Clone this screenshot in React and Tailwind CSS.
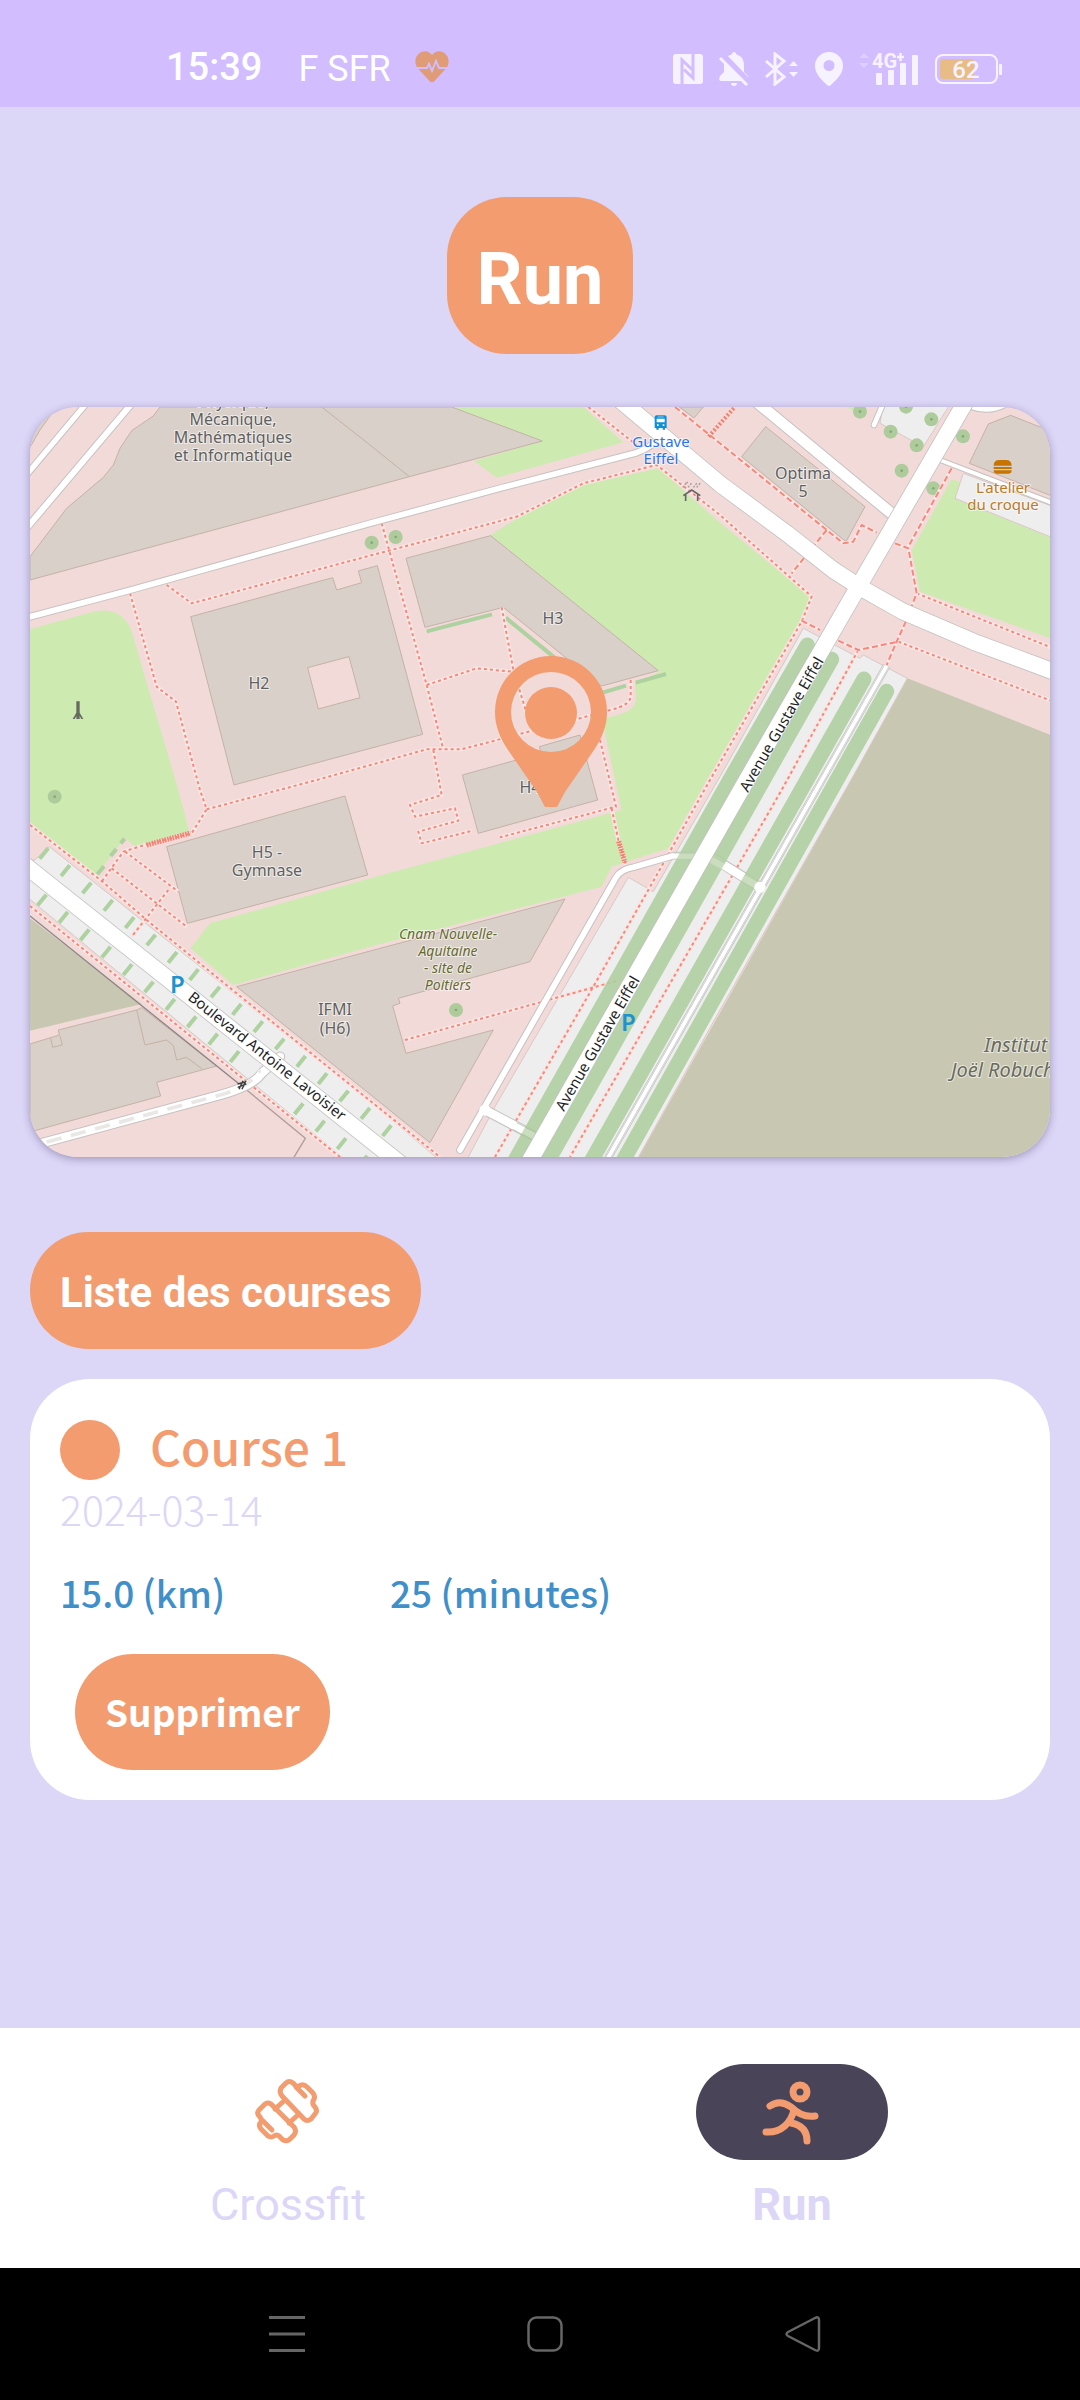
import React from "react";

const ROBOTO = "font-[Roboto,sans-serif]";
const SOURCE = "font-['Noto_Sans_CJK_SC',sans-serif]";

/* ---------- Map data (drawing units, three per pixel) ---------- */

const buildings = [
  "30,21 112,21 85,55 60,90 30,142",
  "30,470 140,325 250,232 280,195 300,145 335,92 400,48 420,21 1295,21 1567,123 1168,230 30,540",
  "512,650 938,533 950,570 1025,548 1015,513 1072,497 1208,1003 642,1155",
  "1158,475 1412,407 1915,812 1745,858 1640,775 1450,622 1215,682",
  "1327,1125 1490,1080 1565,1062 1558,1040 1680,1005 1733,1200 1375,1300",
  "440,1340 975,1188 1043,1425 502,1570",
  "650,1760 1635,1497 1530,1685 1135,1795 1140,1810 1118,1818 1158,1960 1420,1890 1230,2228",
  "30,1932 118,1905 115,1890 350,1830 365,1823 590,1998 410,2047 422,2088 30,2196",
  "2237,80 2535,320 2478,425 2165,170",
  "2848,190 2905,72 2972,46 3045,75 3100,95 3100,290",
  "1978,21 2050,21 2022,54",
];

const grass = [
  "M30 687L225 634Q300 620 332 685L475 1170L507 1292L345 1340L315 1312L228 1427L30 1266Z",
  "M1295 21H1690L1810 127L1430 233L1362 183L1567 123Z",
  "M1915 205L2100 368L2370 590L2340 660L2060 1140L1945 1345L1820 1385L1775 1400L1745 1460L1050 1640L640 1755L512 1645L570 1570L1050 1435L1805 1230L1755 1000L1752 955L1795 945Q1850 930 1848 890L1845 850L1920 815L1412 405L1500 350L1690 255Z",
  "M2795 238L2820 245L2808 297L3100 416V718L2700 575L2675 450Z",
  "M2480 21H2540L2530 50Z",
];

const footways = [
  "M330 580L410 860L468 905L540 1170L560 1228L515 1300L380 1333L310 1355L245 1445",
  "M560 1228L890 1140L1220 1048H1325L1450 1015L1680 955L1770 930Q1835 915 1832 885V840",
  "M1085 370L1220 855L1270 1048M1240 1050L1265 1185L1170 1215L1185 1250L1305 1225L1315 1262L1195 1295L1205 1330L1355 1293",
  "M440 555L515 610L1050 467L1490 350L1690 250L1910 195L2100 345L2375 590L2345 665L2070 1140L1885 1470L1720 1760L1425 2271",
  "M1220 855L1370 805L1475 815M1445 622L1480 810L1520 940",
  "M1740 1020L1788 1220L1440 1312M1775 1225L1795 1320L1818 1395",
  "M1705 21L1850 135",
  "M2690 580L3100 745M2635 725L3100 905M2515 750L2285 1170L1650 2271",
  "M30 1275L250 1447L380 1560L650 1780L1265 2275",
  "M30 1518L680 2045L965 2275",
  "M315 1355L475 1475M275 1405L500 1580M445 1470L335 1610",
  "M1155 1920L1800 1740",
];

const crossings = [
  "M1965 21L2100 130L2420 390L2470 430L2500 425L2525 375L2570 398M2420 390L2315 520",
  "M2625 430L2665 445L2690 580L2655 670L2630 725L2600 795M2795 205L2665 440",
  "M2345 662L2400 690M2455 722L2515 750L2635 725",
];

const roads = [
  { d: "M20 224L200 9", w: 16 },
  { d: "M20 384L337 9", w: 18 },
  { d: "M20 653L325 572L1050 370L1450 262L1850 158Q1900 140 1930 100", w: 17 },
  { d: "M2215 10L2620 345", w: 32 },
  { d: "M2590 10L2562 75", w: 14 },
  { d: "M2850 18Q2910 40 2960 10", w: 16 },
  { d: "M2760 180L3100 310", w: 12 },
  { d: "M1320 2250L1788 1432Q1804 1408 1840 1402L1960 1367H2025", w: 17 },
  { d: "M1395 2130L1550 2212", w: 26 },
  { d: "M2080 1375L2220 1462", w: 26 },
  { d: "M20 2242L600 2085Q700 2058 725 2020L780 1970", w: 25 },
  { d: "M0 1384L1160 2306", w: 48 },
  { d: "M1800 0L2100 252L2300 400L2440 510L2520 562L2650 635L2860 725L3120 822", w: 48 },
  { d: "M2840 0L2515 560L2180 1140L1525 2290", w: 48 },
];

const treeBands = [
  "M2362 735L2129 1140L1480 2290",
  "M2435 778L1580 2290",
  "M2532 837L1710 2290",
  "M2600 874L1805 2290",
];

const trees = [
  [1055, 428], [1127, 411], [104, 1190], [1308, 1830], [2520, 35], [2612, 95],
  [2658, 20], [2734, 58], [2690, 136], [2829, 109], [2645, 212], [2740, 265],
];

const upperTicks = Array.from({ length: 17 }, (_, i) => [72 + i * 64.3, 1360 + i * 52]);
const lowerTicks = Array.from({ length: 16 }, (_, i) => [66 + i * 64.2, 1500 + i * 52.2]).filter(
  (_, i) => i !== 10 && i !== 11,
);

const labels = [
  { x: 203, y: 0, lines: ["Physique,", "Mécanique,", "Mathématiques", "et Informatique"], step: 18 },
  { x: 229, y: 282, lines: ["H2"] },
  { x: 523, y: 217, lines: ["H3"] },
  { x: 500, y: 386, lines: ["H4"] },
  { x: 773, y: 72, lines: ["Optima", "5"], step: 18 },
  { x: 237, y: 451, lines: ["H5 -", "Gymnase"], step: 18 },
  { x: 305, y: 608, lines: ["IFMI", "(H6)"], step: 19 },
];

function MapLabel({ x, y, lines, step = 17, className = "fill-[#5f5f5f] text-[16px]" }) {
  return (
    <text
      textAnchor="middle"
      className={`stroke-white/60 stroke-2 [paint-order:stroke] ${className}`}
    >
      {lines.map((line, i) => (
        <tspan key={line} x={x} y={y + i * step}>
          {line}
        </tspan>
      ))}
    </text>
  );
}

function CampusMap() {
  return (
    <svg
      viewBox="0 0 1020 750"
      role="img"
      aria-label="Carte du campus"
      className="block h-auto w-full bg-[#f2dad9] font-['Noto_Sans',sans-serif]"
    >
      <g transform="translate(-10 -7) scale(0.33333)" fill="none" strokeLinejoin="round">
        <g fill="#c8c7b2">
          <path d="M2662 835L3100 1008V2290H1846L2493 1140Z" />
          <path d="M30 1555L365 1812L30 1892Z" />
        </g>
        <g fill="#cdebb0">
          {grass.map((d) => (
            <path key={d} d={d} />
          ))}
        </g>
        <g fill="#eeeeee" stroke="#d8c8c6" strokeWidth="3">
          <path d="M2350 685L2520 775L2530 765L2662 835L2493 1140L2100 1830L1845 2290H1335L1425 2120L1825 1432L1900 1475L2100 1130Z" />
          <path d="M88 1340L1050 2105L1270 2290H990L20 1490V1380H45Z" />
          <path d="M2590 10H2792L2710 140L2580 70Z" />
          <path d="M2830 220L2805 295L3100 414V320Z" />
        </g>
        <g fill="#d9d0c9" stroke="#c3b2a7" strokeWidth="3">
          {buildings.map((p) => (
            <polygon key={p} points={p} />
          ))}
          <polygon points="863,803 987,770 1020,893 895,927" fill="#f2dad9" />
          <path fill="none" d="M905 21L1050 135L1168 230" />
          <path fill="none" d="M350 1830L375 1935L440 1920L460 1937L470 1980L500 1972L545 2006" />
          <path fill="none" d="M92 1915L98 1942L127 1935L120 1908" />
        </g>
        <path d="M30 1548L680 2070" stroke="#8b8583" strokeWidth="4" />
        <path d="M680 2070L856 2215L820 2275" stroke="#b09c9a" strokeWidth="4" />
        <g stroke="#aed1a0" strokeWidth="12">
          <path d="M1220 694L1416 643M1457 653L1625 790M1750 877L1818 857M1847 848L1938 822" />
          {[...upperTicks, ...lowerTicks].map(([x, y]) => (
            <path key={`${x}-${y}`} d={`M${x - 13} ${y + 16}l26 -32`} />
          ))}
          <path d="M302 1330l12 -14M272 1368l17 -21M232 1423l20 -24" />
        </g>
        <g fill="#aecb9b">
          {trees.map(([x, y]) => (
            <g key={`${x}-${y}`}>
              <circle cx={x} cy={y} r="21" />
              <circle cx={x} cy={y} r="4" fill="#86a878" />
            </g>
          ))}
        </g>
        <g stroke="#f6e7e4" strokeWidth="12">
          {footways.map((d) => (
            <path key={d} d={d} />
          ))}
        </g>
        <g stroke="#f8877b" strokeWidth="6" strokeDasharray="9 9">
          {footways.map((d) => (
            <path key={d} d={d} />
          ))}
        </g>
        <g stroke="#f6e7e4" strokeWidth="10">
          {crossings.map((d) => (
            <path key={d} d={d} />
          ))}
        </g>
        <g stroke="#f8877b" strokeWidth="6" strokeDasharray="18 9">
          {crossings.map((d) => (
            <path key={d} d={d} />
          ))}
        </g>
        <path d="M380 1335L512 1299M1796 1324L1815 1388" stroke="#f4806f" strokeWidth="15" strokeDasharray="5 3" />
        <path d="M2066 110L2142 24" stroke="#f4806f" strokeWidth="12" strokeDasharray="6 6" />
        <g strokeLinecap="round">
          {roads.slice(0, 11).map((r) => (
            <path key={r.d} d={r.d} stroke="#c6c2c1" strokeWidth={r.w + 6} />
          ))}
          {roads.slice(0, 11).map((r) => (
            <path key={r.d} d={r.d} stroke="#ffffff" strokeWidth={r.w} />
          ))}
        </g>
        <path d="M80 2226L600 2085Q690 2062 720 2010" stroke="#e9e8e6" strokeWidth="11" strokeDasharray="46 29" />
        <g stroke="#b1cfa1" strokeWidth="45" strokeLinecap="round" opacity="0.9">
          {treeBands.map((d) => (
            <path key={d} d={d} />
          ))}
        </g>
        <path
          d="M1960 1367H2050L2220 1462M1395 2130L1550 2212"
          stroke="#ffffff"
          strokeWidth="20"
          opacity="0.25"
        />
        <path d="M1960 1359H2025M1490 2168L1550 2199M1478 2188L1545 2224" stroke="#a3bb98" strokeWidth="2" />
        <path d="M2600 797L1755 2290" stroke="#bdbdbd" strokeWidth="23" />
        <path d="M2600 797L1755 2290" stroke="#eeeeee" strokeWidth="19" />
        <path d="M2600 797L1755 2290" stroke="#bdbdbd" strokeWidth="15" />
        <path d="M2600 797L1755 2290" stroke="#ffffff" strokeWidth="12" />
        <circle cx="2220" cy="1462" r="17" fill="#ffffff" />
        <circle cx="1395" cy="2130" r="17" fill="#ffffff" />
        {roads.slice(11).map((r) => (
          <path key={r.d} d={r.d} stroke="#c3c3c0" strokeWidth={r.w + 5} />
        ))}
        {roads.slice(11).map((r) => (
          <path key={r.d} d={r.d} stroke="#ffffff" strokeWidth={r.w} />
        ))}
        <path d="M653 2062l26 -10M653 2052l24 -6M657 2068l12 -26M666 2068l12 -26" stroke="#3c3c3c" strokeWidth="4" />

        {/* Monument */}
        <path d="M169 904h10v34l11 19h-6l-5 -9v9h-10v-9l-5 9h-6l11 -19z" fill="#666b60" />
        {/* Rain shelter */}
        <path d="M1990 287L2015 270L2041 287M1997 284V303M2033 284V303" stroke="#666666" strokeWidth="5" />
        <path d="M1988 262l12 -14M2004 262l12 -14M2020 262l12 -14M1999 250l5 -5M2030 262l12 -14" stroke="#a99a97" strokeWidth="4" strokeDasharray="6 4" />
        {/* Bus stop */}
        <path d="M1910 46h24q6 0 6 6v32h-5v5h-7v-5h-12v5h-7v-5h-5V52q0-6 6-6z" fill="#1090d6" />
        <path d="M1910 56h24v11h-24zM1911 73h5v5h-5zM1928 73h5v5h-5zM1913 50h18v2h-18z" fill="#ffffff" />
        {/* Burger */}
        <path d="M2921 197q0-17 17-17h20q17 0 17 17zM2921 201h54v6h-54zM2921 211h54q0 10-9 10h-36q-9 0-9-10z" fill="#c77400" />
      </g>

      {labels.map((l) => (
        <MapLabel key={l.lines[0]} {...l} />
      ))}
      <MapLabel x={631} y={40} lines={["Gustave", "Eiffel"]} className="fill-[#2a74ea] text-[15px]" />
      <MapLabel x={973} y={86} lines={["L'atelier", "du croque"]} className="fill-[#bb7a27] text-[15px]" />
      <MapLabel
        x={418}
        y={532}
        lines={["Cnam Nouvelle-", "Aquitaine", "- site de", "Poitiers"]}
        className="fill-[#67682f] text-[14px] italic"
      />
      <text className="fill-[#6a6a5c] stroke-white/60 stroke-2 text-[20px] italic [paint-order:stroke]">
        <tspan x="954" y="645">Institut</tspan>
        <tspan x="921" y="670">Joël Robuchon</tspan>
      </text>
      <g className="fill-[#1f1f1f] stroke-white/60 stroke-2 text-[15px] [paint-order:stroke]">
        <text transform="translate(718 386) rotate(-60)">Avenue Gustave Eiffel</text>
        <text transform="translate(534 705) rotate(-60)">Avenue Gustave Eiffel</text>
        <text transform="translate(157 592) rotate(38.5)">Boulevard Antoine Lavoisier</text>
      </g>
      <g className="fill-[#1f92cf] text-[24px] font-semibold">
        <text x="140" y="586">P</text>
        <text x="591" y="624">P</text>
      </g>

      {/* Position marker */}
      <path
        fill="#f39c6f"
        fillRule="evenodd"
        d="M465 305a56 56 0 0 1 112 0c0 14 -5 26 -13 38L535 385L527 400h-12L507 385L478 343c-8 -12 -13 -24 -13 -38zM481 305a40 40 0 0 0 80 0a40 40 0 0 0 -80 0z"
      />
      <circle cx="521" cy="306" r="26" fill="#f39c6f" />
    </svg>
  );
}

/* ---------- Status bar ---------- */

function StatusBar() {
  return (
    <header className={`flex h-[107px] items-end justify-between bg-[#d1bdff] pr-[78px] pb-5 pl-[166px] ${ROBOTO}`}>
      <div className="flex items-center text-white">
        <span className="text-[38px] leading-9 font-medium">15:39</span>
        <span className="ml-9 pt-1 text-[36px] leading-9">F SFR</span>
        <svg width="34" height="32" viewBox="0 0 34 32" className="ml-6" aria-hidden="true">
          <path
            d="M17 4C20 -.5 26-1 30 2.500C34 6 35 12 31.500 17L19 30.500Q17 32 15 30.500L2.500 17C-1 12 0 6 4 2.500C8-1 14-.5 17 4Z"
            fill="#df9c77"
          />
          <path d="M2 17H12L14 13L17 20L21 10L24 17H32" fill="none" stroke="#d1bdff" strokeWidth="2" />
        </svg>
      </div>
      <div className="flex h-9 items-center gap-4 text-[#f7f2ff]">
        <svg width="30" height="30" viewBox="0 0 30 30" aria-hidden="true">
          <rect width="30" height="30" rx="3" fill="currentColor" />
          <path d="M9 30V6L19 15.500M20 0V24L11 15.500" fill="none" stroke="#d1bdff" strokeWidth="3" />
        </svg>
        <svg width="30" height="34" viewBox="0 0 30 34" aria-hidden="true">
          <path
            d="M15 0q2 0 2.500 2.500C23 4 25 8 25 13V20L29 24q2 5-1 5H2q-3 0-1-5l4-4V13C5 8 7 4 12.500 2.500Q13 0 15 0ZM12 31h6q0 3-3 3t-3-3z"
            fill="currentColor"
          />
          <path d="M3 3L29 30" stroke="#d1bdff" strokeWidth="7" />
          <path d="M1 6L28 33" stroke="currentColor" strokeWidth="3" />
        </svg>
        <svg width="34" height="34" viewBox="0 0 34 34" fill="none" aria-hidden="true">
          <path d="M1 9L19 25L10 32V2L19 9L1 25" stroke="currentColor" strokeWidth="3" />
          <path d="M24 14L28.500 9L33 14ZM24 20L28.500 25L33 20Z" fill="currentColor" />
        </svg>
        <svg width="28" height="34" viewBox="0 0 28 34" aria-hidden="true">
          <path
            d="M14 0a14 14 0 0 1 14 14c0 8-7 14-12 19q-2 2-4 0C7 28 0 22 0 14A14 14 0 0 1 14 0ZM14 8a5.500 5.500 0 1 0 0 11a5.500 5.500 0 0 0 0-11Z"
            fill="currentColor"
            fillRule="evenodd"
          />
        </svg>
        <svg width="60" height="34" viewBox="0 0 60 34" className="overflow-visible" aria-hidden="true">
          <path d="M0 6L5 1L10 6ZM0 11L5 16L10 11Z" fill="#dccfff" />
          <text x="13" y="16" fill="currentColor" className="text-[20px] font-bold">
            4G
          </text>
          <path d="M38 5h7M41.500 1v8" stroke="currentColor" strokeWidth="2.500" />
          <g fill="currentColor">
            <rect x="17" y="21" width="6" height="12" rx="1" />
            <rect x="29" y="18" width="6" height="15" rx="1" />
            <rect x="41" y="11" width="6" height="22" rx="1" />
            <rect x="53" y="3" width="6" height="30" rx="1" />
          </g>
        </svg>
        <svg width="67" height="30" viewBox="0 0 67 30" aria-hidden="true">
          <rect x="1" y="1" width="61" height="28" rx="7" fill="none" stroke="currentColor" strokeWidth="2" />
          <rect x="5" y="5" width="34" height="20" rx="3" fill="#e8bc85" />
          <rect x="64" y="10" width="3" height="11" rx="1" fill="currentColor" />
          <text x="31" y="24" textAnchor="middle" fill="currentColor" className="text-[24px] font-medium">
            62
          </text>
        </svg>
      </div>
    </header>
  );
}

/* ---------- Tab icons ---------- */

function DumbbellIcon() {
  return (
    <svg width="72" height="72" viewBox="1 0 72 72" fill="none" stroke="#f39c6f" strokeWidth="5" strokeLinecap="round" strokeLinejoin="round" aria-hidden="true">
      <path d="M8 34L14 28Q17 26 20 28L43 51Q46 55 43 59L39 63Q36 66 32 64L28 60Q26 58 23 60Q20 62 17 60L10 53Q7 49 10 46Q11 44 9 41Q5 38 8 34Z" />
      <path d="M30 12L35 7Q38 4 42 7L46 11L50 9Q53 8 56 11L62 17Q65 21 62 25Q61 28 64 31Q67 35 64 38L60 43Q56 46 53 43L31 20Q28 16 30 12Z" />
      <path d="M45 11L54 20M12 45L21 54M24 33L34 24M38 47L48 38" />
    </svg>
  );
}

function RunnerIcon() {
  return (
    <svg width="72" height="72" viewBox="1 0 72 72" fill="none" stroke="#f39c6f" strokeWidth="7" strokeLinecap="round" strokeLinejoin="round" aria-hidden="true">
      <circle cx="45" cy="16" r="7" />
      <path d="M15 30Q25 23 36 31Q47 42 60 40" />
      <path d="M39 34C36 46 27 57 11 56" />
      <path d="M36 47Q52 50 52 65" />
    </svg>
  );
}

function Tab({ label, active, children }) {
  return (
    <a href={`#${label.toLowerCase()}`} aria-current={active ? "page" : undefined} className="flex flex-col items-center gap-[17px]">
      <span className={`flex h-24 w-48 items-center justify-center rounded-full ${active ? "bg-[#4a4458]" : ""}`}>
        {children}
      </span>
      <span className={`text-[45px] leading-[56px] text-[#dcd6f7] ${active ? "font-bold" : ""}`}>{label}</span>
    </a>
  );
}

export default function App() {
  return (
    <div className="flex min-h-screen flex-col bg-[#dcd6f7]">
      <StatusBar />

      <main className="flex-1 px-[30px] pt-[90px]">
        <h1 className={`mx-auto flex h-[157px] w-fit items-center rounded-[60px] bg-[#f39c6f] px-[30px] pt-2 text-[72px] font-bold text-white ${ROBOTO}`}>
          Run
        </h1>

        <section className="mt-[53px] overflow-hidden rounded-[48px] shadow-[0_2px_8px_rgba(60,50,90,0.4)]">
          <CampusMap />
        </section>

        <h2 className={`mt-[75px] flex h-[117px] w-fit items-center rounded-full bg-[#f39c6f] px-[30px] pt-1 text-[42px] font-bold text-white ${ROBOTO}`}>
          Liste des courses
        </h2>

        <article className={`mt-[30px] rounded-[60px] bg-white p-[30px] ${SOURCE}`}>
          <div className="flex items-start gap-[30px]">
            <span className="mt-[11px] size-[60px] rounded-full bg-[#f39c6f]" />
            <h3 className="pt-1 text-[48px] leading-[64px] font-medium text-[#f39c6f]">Course 1</h3>
          </div>
          <p className="text-[41px] leading-[56px] font-light text-[#dcd6f7]">2024-03-14</p>
          <div className="mt-7 flex text-[37px] leading-[56px] font-medium text-[#3f8fc9]">
            <p className="w-[330px]">15.0 (km)</p>
            <p>25 (minutes)</p>
          </div>
          <button type="button" className="mt-[34px] ml-[15px] block h-[116px] rounded-full bg-[#f39c6f] px-[30px] text-[37px] font-bold text-white">
            Supprimer
          </button>
        </article>
      </main>

      <nav className={`grid h-[240px] grid-cols-2 bg-white px-9 pt-9 ${ROBOTO}`}>
        <Tab label="Crossfit">
          <DumbbellIcon />
        </Tab>
        <Tab label="Run" active>
          <RunnerIcon />
        </Tab>
      </nav>

      <footer className="flex h-[132px] items-center justify-center gap-[222px] bg-black pl-[10px] text-[#666666]">
        <button type="button" aria-label="Applications récentes">
          <svg width="36" height="36" viewBox="0 0 36 36" stroke="currentColor" strokeWidth="3">
            <path d="M0 1.500H36M0 18H36M0 34.500H36" />
          </svg>
        </button>
        <button type="button" aria-label="Accueil">
          <svg width="36" height="36" viewBox="0 0 36 36" fill="none" stroke="currentColor" strokeWidth="2.500">
            <rect x="1.500" y="1.500" width="33" height="33" rx="8" />
          </svg>
        </button>
        <button type="button" aria-label="Retour">
          <svg width="36" height="36" viewBox="0 0 36 36" fill="none" stroke="currentColor" strokeWidth="2.500" strokeLinejoin="round">
            <path d="M30 2Q34 0 34 4V32Q34 36 30 34L3 20Q0 18 3 16Z" />
          </svg>
        </button>
      </footer>
    </div>
  );
}
